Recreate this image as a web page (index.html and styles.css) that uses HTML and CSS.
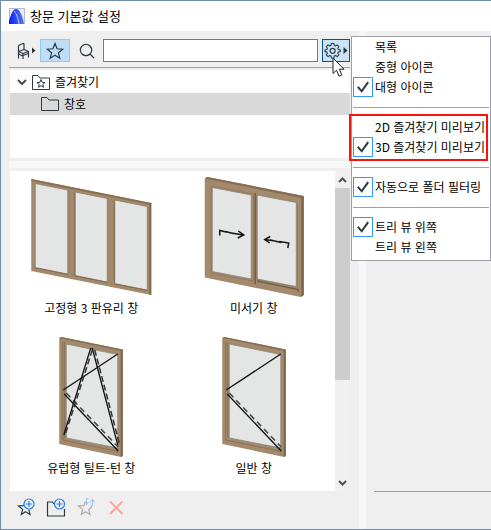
FILE: index.html
```html
<!DOCTYPE html>
<html lang="ko">
<head>
<meta charset="utf-8">
<meta name="viewport" content="width=device-width, initial-scale=1">
<title>창문 기본값 설정</title>
<link rel="stylesheet" href="styles.css">
</head>
<body>
<div class="window">
  <header class="titlebar">
    <svg class="logo" width="16" height="16" viewBox="0 0 16 16" aria-hidden="true">
      <defs><linearGradient id="arc" x1="0" y1="0" x2="1" y2="0"><stop offset="0" stop-color="#0a1ee8"/><stop offset="1" stop-color="#5b7cf5"/></linearGradient></defs>
      <rect x=".5" y=".5" width="15" height="15" fill="#e9ecf2" stroke="#b4bccb"/>
      <path d="M0 16V13C2 6 4 1 7 1c4 0 7 8 8 15H0z" fill="url(#arc)"/>
      <path d="M5 3c3 3 4 8 5 13" fill="none" stroke="#b5c6ff"/>
    </svg>
    <h1 class="title">창문 기본값 설정</h1>
  </header>
  <main class="workspace">
    <section class="browser">
      <div class="toolbar">
        <button class="tool tool-chair" type="button" aria-label="요소 유형">
          <svg width="20" height="18" viewBox="0 0 20 18">
            <g fill="none" stroke="#2b3a42" stroke-width="1.2" stroke-linejoin="round"><path d="M2.500 16.500V4.500Q2.500 3.500 3.500 3L7 1.500Q8 1.200 8 2.500V7.500M2.500 9.500 8 7.500 12.500 9.500 7 11.500zM7 11.500V17M12.500 9.500V15.500M2.500 12 7 14M7 13.500l5.500-2"/></g>
            <path d="M16 5.500v6l3.500-3z" fill="#333"/>
          </svg>
        </button>
        <button class="tool tool-star" type="button" aria-label="즐겨찾기" aria-pressed="true">
          <svg width="18" height="18" viewBox="0 0 18 18"><path d="M9 1.500 11.100 6.800 16.800 7.200 12.400 10.800 13.800 16.300 9 13.300 4.200 16.300 5.600 10.800 1.200 7.200 6.900 6.800z" fill="none" stroke="#2b3a42" stroke-width="1.200"/></svg>
        </button>
        <button class="tool tool-search" type="button" aria-label="검색">
          <svg width="16" height="16" viewBox="0 0 16 16"><g fill="none" stroke="#2b3a42" stroke-width="1.200"><circle cx="7" cy="7" r="5.700"/><path d="m11 11 4 4"/></g></svg>
        </button>
        <input class="search" type="text" aria-label="검색어">
        <div class="settings">
          <button class="gear" type="button" aria-label="보기 설정" aria-expanded="true">
            <svg width="24" height="18" viewBox="0 0 24 18">
              <g fill="none" stroke="#2b3a42" stroke-width="1.200" stroke-linejoin="round"><path transform="translate(.5 .2) scale(.9)" d="M7.500 1.500h3l.3 2 1.500.7L14 3l2 2-1.200 1.700.6 1.500 2.100.3v2l-2.100.4-.6 1.500L16 14l-2 2-1.700-1.200-1.500.6-.3 2.100h-3l-.3-2.100-1.500-.6L4 16l-2-2 1.200-1.600-.6-1.500-2.100-.4v-2l2.100-.3.6-1.500L2 5l2-2 1.700 1.200 1.500-.7z"/><circle cx="8.600" cy="8.800" r="2.500"/></g>
              <path d="M19.500 5v7l4-3.500z" fill="#333"/>
            </svg>
          </button>
          <svg class="cursor" width="13" height="20" viewBox="0 0 13 20" aria-hidden="true"><path d="M1 1v15.500l3.500-3.300 2.600 5.900 2.700-1.200L7.300 12.200H12z" fill="#fff" stroke="#222"/></svg>
          <div class="menu">
            <div class="group">
              <label class="option"><input type="checkbox">목록</label>
              <label class="option"><input type="checkbox">중형 아이콘</label>
              <label class="option"><input type="checkbox" checked>대형 아이콘</label>
            </div>
            <hr>
            <div class="group highlighted">
              <label class="option"><input type="checkbox">2D 즐겨찾기 미리보기</label>
              <label class="option"><input type="checkbox" checked>3D 즐겨찾기 미리보기</label>
            </div>
            <hr>
            <div class="group">
              <label class="option"><input type="checkbox" checked>자동으로 폴더 필터링</label>
            </div>
            <hr>
            <div class="group">
              <label class="option"><input type="checkbox" checked>트리 뷰 위쪽</label>
              <label class="option"><input type="checkbox">트리 뷰 왼쪽</label>
            </div>
          </div>
        </div>
      </div>
      <div class="tree">
        <div class="node">
          <svg width="10" height="6" viewBox="0 0 10 6"><path d="m1 1 4 4 4-4" fill="none" stroke="#444" stroke-width="1.800"/></svg>
          <svg width="18" height="16" viewBox="0 0 18 16"><path d="M.5 15.500V1.500H6L8 4H17.500V15.500z" fill="none" stroke="#2b3a42"/><path d="m9 5.500 1.100 2.800 2.900.2-2.200 1.900.7 2.900L9 11.700l-2.500 1.600.7-2.900L5 8.500l2.900-.2z" fill="none" stroke="#2b3a42"/></svg>
          <span>즐겨찾기</span>
        </div>
        <div class="node child selected">
          <svg width="18" height="16" viewBox="0 0 18 16"><path d="M.5 14.500V1.500H6L8 4H17.500V14.500z" fill="none" stroke="#2b3a42"/></svg>
          <span>창호</span>
        </div>
      </div>
      <div class="splitter-h"></div>
      <div class="list">
        <div class="gallery">
          <figure class="item">
            <svg viewBox="10 174 162 126">
              <path d="M31 179 151 203V295L31 271z" fill="#a38a6c"/>
              <path d="M31 179 151 203V205L31 181z" fill="#8a7156"/>
              <path d="M149 203h2v92l-2-.5z" fill="#7e674d"/>
              <g fill="#e3e6e5" stroke="#867056" stroke-width=".7"><path d="M35 183.500 67.500 190V274L35 267.500z"/><path d="M75 192 107 198.500V282L75 275.500z"/><path d="M114.500 200 147 206.500V290L114.500 283.500z"/></g>
              <path d="M74 192V275.500M114 200V283.500M35 268 67.500 274.500M75 276 107 282.500M114.500 284 147 290.500" fill="none" stroke="#826e56"/>
            </svg>
            <figcaption>고정형 3 판유리 창</figcaption>
          </figure>
          <figure class="item">
            <svg viewBox="172 174 162 126">
              <path d="M203.500 178.500 206 177 302.500 196V295L299.500 297 203.500 277.500z" fill="#a38a6c"/>
              <path d="M203.500 178.500 206 177 302.500 196 300 198z" fill="#876e53"/>
              <path d="m300 198 2.500-2v99l-2.500 2z" fill="#7d664c"/>
              <path d="M210 186 252 194V281L210 273zM255 195 296 203V287L255 279z" fill="none" stroke="#927a5d"/>
              <g fill="#e3e6e5" stroke="#8d8778" stroke-width=".8"><path d="M211 187.500 250 195V279L211 271.500z"/><path d="M256 195 295 202.500V286.500L256 279z"/></g>
              <path d="M254 193V284M256 281 297 289.500V292" fill="none" stroke="#755f47" stroke-width="1.500"/>
              <g fill="none" stroke="#151515" stroke-width="1.500"><path d="M218.500 235.500V230.500L225 232M224 231.500l8 2M230 233l12 2M237 231l5.500 4-6 3M263.500 239.500 274 241M269 240l11 2.500M278 241.500l9.500 1.500-1 5M269 236.500l-5.500 3 5 3.500"/></g>
            </svg>
            <figcaption>미서기 창</figcaption>
          </figure>
          <figure class="item">
            <svg viewBox="10 334 162 126">
              <defs>
                <g id="sash">
                  <path d="M59 338 61 337 122.500 349.500V456L121 457 59 444z" fill="#a38a6c"/>
                  <path d="M59 338 61 337 122.500 349.500 121 351z" fill="#876e53"/>
                  <path d="m120.500 350.500 2-1V456l-2 1z" fill="#7d664c"/>
                  <path d="M62.500 341.500V440L118 451.500M64.500 342V437L118 448" fill="none" stroke="#806b53" stroke-width=".8"/>
                  <path d="M66 344 117.500 354.500V448L66 438z" fill="#e3e6e5" stroke="#8d8778" stroke-width=".8"/>
                  <path d="M63 390 117.500 354M64 394 118 451" fill="none" stroke="#101010" stroke-width="1.300"/>
                  <path d="M66 393 118 447" fill="none" stroke="#444" stroke-width="1.500" stroke-dasharray="6 4"/>
                </g>
              </defs>
              <use href="#sash"/>
              <path d="M90.500 348 63.500 435M92 348 117.500 445" fill="none" stroke="#101010" stroke-width="1.300"/>
              <path d="M92 350 65.500 433M94.500 350 119 443" fill="none" stroke="#333" stroke-width="1.500" stroke-dasharray="6 3"/>
            </svg>
            <figcaption>유럽형 틸트-턴 창</figcaption>
          </figure>
          <figure class="item">
            <svg viewBox="10 334 162 126"><use href="#sash"/></svg>
            <figcaption>일반 창</figcaption>
          </figure>
        </div>
        <div class="scrollbar">
          <svg width="15" height="17" viewBox="0 0 15 17"><path d="M4 11 7.500 7.500 11 11" fill="none" stroke="#505050" stroke-width="2"/></svg>
          <div class="track"><div class="thumb"></div></div>
          <svg width="15" height="17" viewBox="0 0 15 17"><path d="M4 7 7.500 10.500 11 7" fill="none" stroke="#505050" stroke-width="2"/></svg>
        </div>
      </div>
      <div class="actions">
        <button type="button" aria-label="새 즐겨찾기">
          <svg width="20" height="20" viewBox="0 0 20 20"><path d="M9.500 4.500 7.800 8.700 2.500 9 6.700 12.400 5.300 17.500 9.500 14.800 14 17.500 12.800 12.700" fill="none" stroke="#2b3a42" stroke-width="1.200"/><circle cx="13" cy="7" r="5" fill="#efefef" stroke="#2680eb" stroke-width="1.200"/><path d="M10 7h6M13 4v6" stroke="#2680eb" stroke-width="1.200"/></svg>
        </button>
        <button type="button" aria-label="새 폴더">
          <svg width="20" height="20" viewBox="0 0 20 20"><path d="M8 7 6.500 5H1.500v14h17V12" fill="none" stroke="#2b3a42" stroke-width="1.200"/><circle cx="13.500" cy="7" r="5" fill="#efefef" stroke="#2680eb" stroke-width="1.200"/><path d="M10.500 7h6M13.500 4v6" stroke="#2680eb" stroke-width="1.200"/></svg>
        </button>
        <button type="button" aria-label="즐겨찾기 재정의" disabled>
          <svg width="20" height="20" viewBox="0 0 20 20"><path d="M9.500 4.500 7.800 8.700 2.500 9 6.700 12.400 5.300 17.500 9.500 14.800 14 17.500 12.700 12.700 16 9.500" fill="none" stroke="#aaa" stroke-width="1.200"/><path d="M12.500 1.500H10.500V7M8.500 5l2 2.500 2-2.500M14.500 8.500h2V2.500M14.500 5l2-2.500 2 2.500" fill="none" stroke="#a5c8f8" stroke-width="1.200"/></svg>
        </button>
        <button type="button" aria-label="삭제" disabled>
          <svg width="20" height="20" viewBox="0 0 20 20"><path d="m4 4.500 12.500 12.500M16.500 4.500 4 17" fill="none" stroke="#f8a99c" stroke-width="2"/></svg>
        </button>
      </div>
    </section>
    <div class="splitter-v"></div>
    <section class="details"></section>
  </main>
</div>
</body>
</html>
```
FILE: styles.css
```css
* {
  box-sizing: border-box;
}

body {
  margin: 0;
  font: 12px/16px "Noto Sans CJK KR", sans-serif;
  color: #000;
}

svg {
  display: block;
  flex: none;
}

button {
  display: flex;
  align-items: center;
  justify-content: center;
  padding: 0;
  border: 0;
  background: none;
}

.window {
  display: flex;
  flex-direction: column;
  min-height: 100vh;
  border: solid #6f8ca6;
  border-width: 1px 0 1px 1px;
  background: #efefef;
  overflow: hidden;
}

.titlebar {
  display: flex;
  align-items: center;
  gap: 5px;
  height: 30px;
  padding-left: 8px;
  background: #fff;
}

.title {
  margin: 0;
  font-size: 13px;
  font-weight: 400;
}

.workspace {
  flex: 1;
  display: grid;
  grid-template-columns: minmax(0, 358fr) 7px minmax(0, 125fr);
}

.browser {
  display: flex;
  flex-direction: column;
  padding: 0 9px 0 8px;
}

.toolbar {
  display: flex;
  align-items: center;
  padding: 8px 0 5px 7px;
  border-bottom: 1px solid #a0a0a0;
}

.tool {
  height: 23px;
}

.tool-chair {
  width: 20px;
}

.tool-star {
  width: 30px;
  margin-left: 4px;
  border: 1px solid #90c8f6;
  background: #c0def5;
}

.tool-search {
  width: 33px;
}

.search {
  flex: 1;
  min-width: 0;
  height: 23px;
  margin-right: 4px;
  border: 1px solid #7a7a7a;
  background: #fff;
  font: inherit;
}

.settings {
  position: relative;
}

.gear {
  width: 28px;
  height: 23px;
  border: 1px solid #00559b;
  background: #cce4f7;
}

.cursor {
  position: absolute;
  top: 18px;
  left: 10px;
  z-index: 3;
}

.menu {
  position: absolute;
  top: -3px;
  left: calc(100% + 1px);
  z-index: 2;
  min-width: 140px;
  padding-bottom: 3px;
  border: 1px solid #a0a0a8;
  background: #fff;
  white-space: nowrap;
}

.menu hr {
  height: 1px;
  margin: 10px 1px 9px;
  border: 0;
  background: #a0a0a0;
}

.group {
  position: relative;
}

.highlighted::after {
  content: "";
  position: absolute;
  inset: -3px 2px -4px -3px;
  border: 2px solid #fa1010;
  pointer-events: none;
}

.option {
  display: flex;
  align-items: center;
  gap: 2px;
  height: 20px;
  padding-left: 1px;
}

.option input {
  appearance: none;
  display: flex;
  align-items: center;
  justify-content: center;
  width: 20px;
  height: 20px;
  margin: 0;
}

.option input:checked {
  border: 1px solid #3399ff;
}

.option input:checked::before {
  content: "";
  width: 12px;
  height: 12px;
  background: #2b3a42;
  clip-path: polygon(0 55%, 14% 44%, 38% 72%, 86% 4%, 100% 14%, 40% 98%);
}

.tree {
  height: 88px;
  margin: 2px 0 3px 1px;
  background: #fff;
}

.node {
  display: flex;
  align-items: center;
  gap: 5px;
  height: 23px;
  padding-left: 7px;
}

.child {
  height: 22px;
  padding-left: 31px;
}

.selected {
  background: #d9d9d9;
}

.splitter-h {
  height: 7px;
  margin-bottom: 3px;
  background: #f7f7f7;
}

.list {
  flex: 1;
  display: flex;
  margin-left: 1px;
  background: #fff;
}

.gallery {
  flex: 1;
  display: grid;
  grid-template-columns: 1fr 1fr;
  align-content: start;
  row-gap: 18px;
  padding-top: 3px;
}

.item {
  margin: 0;
  text-align: center;
}

.item svg {
  width: 100%;
  height: 126px;
}

.scrollbar {
  display: flex;
  flex-direction: column;
  width: 15px;
  background: #f0f0f0;
}

.track {
  flex: 1;
}

.thumb {
  height: 67%;
  background: #cdcdcd;
}

.actions {
  display: flex;
  gap: 10px;
  height: 38px;
  padding: 6px 0 0 7px;
}

.actions button {
  width: 20px;
  height: 20px;
}

.splitter-v {
  background: #f7f7f7;
}

.details {
  margin: 0 0 37px 8px;
  border-bottom: 1px solid #a0a0a0;
}
```
